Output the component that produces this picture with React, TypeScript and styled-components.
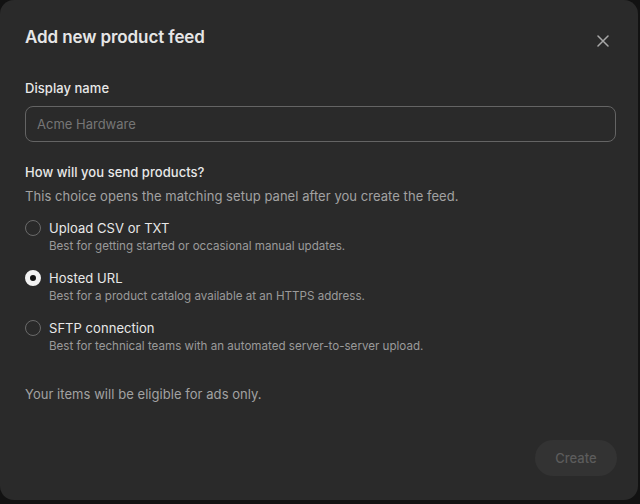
import React from "react";
import styled, { createGlobalStyle } from "styled-components";

const Global = createGlobalStyle`
  html, body { margin: 0; padding: 0; background: #121212; }
  body { font-family: Inter, "Noto Sans", sans-serif; -webkit-font-smoothing: antialiased; }
  * { box-sizing: border-box; }
`;

const Dialog = styled.div`
  width: 638px;
  height: 500px;
  background: #2a2a2a;
  border-radius: 14px;
  padding: 26px 24px 24px 25px;
  display: flex;
  flex-direction: column;
  color: #e8e8e8;
`;

const Header = styled.div`
  display: flex;
  align-items: flex-start;
  justify-content: space-between;
`;

const Title = styled.h2`
  margin: 0;
  font-size: 17px;
  line-height: 22px;
  font-weight: 600;
  color: #e6e6e6;
  letter-spacing: -0.1px;
`;

const CloseButton = styled.button`
  border: 0;
  background: none;
  padding: 0;
  margin: 9px 5px 0 0;
  width: 12px;
  height: 12px;
  display: flex;
  color: #a8a8a8;
  cursor: pointer;
`;

const Field = styled.div`
  margin-top: 30px;
  display: flex;
  flex-direction: column;
`;

const Label = styled.label`
  font-size: 13px;
  line-height: 20px;
  font-weight: 500;
  color: #e8e8e8;
  letter-spacing: 0.05px;
`;

const Input = styled.input`
  margin-top: 8px;
  height: 36px;
  width: 591px;
  background: transparent;
  border: 1px solid #646464;
  border-radius: 8px;
  padding: 0 11px;
  font-family: inherit;
  font-size: 13px;
  color: #e8e8e8;
  outline: none;
  &::placeholder { color: #767676; }
`;

const Section = styled.div`
  margin-top: 20px;
  display: flex;
  flex-direction: column;
`;

const Hint = styled.p`
  margin: 4px 0 0;
  font-size: 13px;
  line-height: 20px;
  color: #a2a2a2;
  letter-spacing: 0.05px;
`;

const Options = styled.div`
  margin-top: 12px;
  display: flex;
  flex-direction: column;
  gap: 14px;
`;

const Option = styled.label`
  display: grid;
  grid-template-columns: 16px 1fr;
  column-gap: 8px;
  cursor: pointer;
`;

const Radio = styled.span<{ $checked?: boolean }>`
  width: 16px;
  height: 16px;
  margin-top: 2px;
  border-radius: 50%;
  border: ${(p) => (p.$checked ? "5px solid #f2f2f2" : "1px solid #6a6a6a")};
  background: ${(p) => (p.$checked ? "#111" : "transparent")};
`;

const OptionTitle = styled.span`
  font-size: 13px;
  line-height: 20px;
  color: #e8e8e8;
  letter-spacing: 0.05px;
`;

const OptionDesc = styled.span`
  grid-column: 2;
  font-size: 11.6px;
  line-height: 16px;
  color: #9a9a9a;
`;

const Note = styled.p`
  margin: 30px 0 0;
  font-size: 13px;
  line-height: 20px;
  color: #a2a2a2;
  letter-spacing: 0.05px;
`;

const Footer = styled.div`
  margin-top: auto;
  display: flex;
  justify-content: flex-end;
`;

const CreateButton = styled.button`
  height: 36px;
  width: 82px;
  border: 0;
  border-radius: 18px;
  background: #333333;
  color: #5c5c5c;
  font-family: inherit;
  font-size: 13px;
  font-weight: 500;
  margin-right: -3px;
`;

const options = [
  { title: "Upload CSV or TXT", desc: "Best for getting started or occasional manual updates.", checked: false },
  { title: "Hosted URL", desc: "Best for a product catalog available at an HTTPS address.", checked: true },
  { title: "SFTP connection", desc: "Best for technical teams with an automated server-to-server upload.", checked: false },
];

export default function App() {
  return (
    <>
      <Global />
      <Dialog>
        <Header>
          <Title>Add new product feed</Title>
          <CloseButton aria-label="Close">
            <svg width="12" height="12" viewBox="0 0 12 12" fill="none">
              <path d="M1 1L11 11M11 1L1 11" stroke="currentColor" strokeWidth="1.5" strokeLinecap="round" />
            </svg>
          </CloseButton>
        </Header>
        <Field>
          <Label>Display name</Label>
          <Input placeholder="Acme Hardware" />
        </Field>
        <Section>
          <Label>How will you send products?</Label>
          <Hint>This choice opens the matching setup panel after you create the feed.</Hint>
          <Options>
            {options.map((o) => (
              <Option key={o.title}>
                <Radio $checked={o.checked} />
                <OptionTitle>{o.title}</OptionTitle>
                <OptionDesc>{o.desc}</OptionDesc>
              </Option>
            ))}
          </Options>
        </Section>
        <Note>Your items will be eligible for ads only.</Note>
        <Footer>
          <CreateButton disabled>Create</CreateButton>
        </Footer>
      </Dialog>
    </>
  );
}
